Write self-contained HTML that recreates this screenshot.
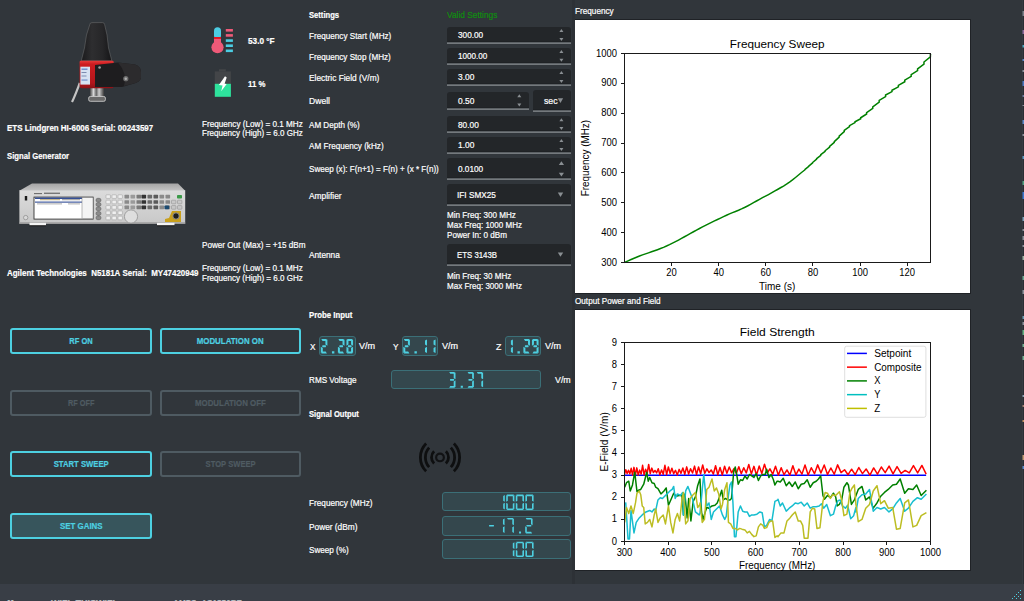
<!DOCTYPE html>
<html><head><meta charset="utf-8"><style>
html,body{margin:0;padding:0;}
body{width:1024px;height:601px;overflow:hidden;position:relative;background:#31363b;font-family:"Liberation Sans",sans-serif;}
.t{position:absolute;white-space:nowrap;line-height:1;-webkit-text-stroke:0.2px currentColor;}
svg{position:absolute;overflow:visible;}
</style></head><body>
<div style="position:absolute;left:572.00px;top:0.00px;width:3.00px;height:584.00px;background:#2d3136"></div>
<div style="position:absolute;left:0.00px;top:584.00px;width:1024.00px;height:17.00px;background:#393e46"></div>
<div class="t" style="left:6.60px;top:123.98px;font-size:9.00px;font-weight:bold;color:#ffffff;transform:scaleX(0.8830);transform-origin:0 0;">ETS Lindgren HI-6006 Serial: 00243597</div>
<div class="t" style="left:6.60px;top:152.48px;font-size:9.00px;font-weight:bold;color:#ffffff;transform:scaleX(0.8563);transform-origin:0 0;">Signal Generator</div>
<div class="t" style="left:6.60px;top:269.38px;font-size:9.00px;font-weight:bold;color:#ffffff;transform:scaleX(0.8828);transform-origin:0 0;">Agilent&nbsp;Technologies&nbsp;&nbsp;N5181A&nbsp;Serial:&nbsp;&nbsp;MY47420949</div>
<div class="t" style="left:247.60px;top:36.98px;font-size:9.00px;font-weight:bold;color:#ffffff;transform:scaleX(0.9136);transform-origin:0 0;">53.0 °F</div>
<div class="t" style="left:247.60px;top:80.18px;font-size:9.00px;font-weight:bold;color:#ffffff;transform:scaleX(0.8692);transform-origin:0 0;">11 %</div>
<div class="t" style="left:201.80px;top:119.68px;font-size:9.00px;font-weight:normal;color:#ffffff;transform:scaleX(0.9057);transform-origin:0 0;">Frequency (Low) = 0.1 MHz</div>
<div class="t" style="left:201.80px;top:129.08px;font-size:9.00px;font-weight:normal;color:#ffffff;transform:scaleX(0.8936);transform-origin:0 0;">Frequency (High) = 6.0 GHz</div>
<div class="t" style="left:201.80px;top:240.98px;font-size:9.00px;font-weight:normal;color:#ffffff;transform:scaleX(0.9027);transform-origin:0 0;">Power Out (Max) = +15 dBm</div>
<div class="t" style="left:201.80px;top:264.48px;font-size:9.00px;font-weight:normal;color:#ffffff;transform:scaleX(0.9057);transform-origin:0 0;">Frequency (Low) = 0.1 MHz</div>
<div class="t" style="left:201.80px;top:273.98px;font-size:9.00px;font-weight:normal;color:#ffffff;transform:scaleX(0.8936);transform-origin:0 0;">Frequency (High) = 6.0 GHz</div>
<div style="position:absolute;left:10.00px;top:328.00px;width:142.00px;height:26.10px;border:2px solid #4dd0e1;border-radius:3px;box-sizing:border-box;"></div>
<div class="t" style="left:67.00px;top:337.43px;font-size:9.00px;font-weight:bold;color:#4dd0e1;transform:scaleX(0.8358);transform-origin:50% 0;">RF ON</div>
<div style="position:absolute;left:160.00px;top:328.00px;width:141.00px;height:26.10px;border:2px solid #4dd0e1;border-radius:3px;box-sizing:border-box;"></div>
<div class="t" style="left:192.34px;top:337.43px;font-size:9.00px;font-weight:bold;color:#4dd0e1;transform:scaleX(0.8778);transform-origin:50% 0;">MODULATION ON</div>
<div style="position:absolute;left:10.00px;top:390.00px;width:142.00px;height:25.80px;border:2px solid #4f5b62;border-radius:3px;box-sizing:border-box;"></div>
<div class="t" style="left:64.75px;top:399.28px;font-size:9.00px;font-weight:bold;color:#4f5b62;transform:scaleX(0.8155);transform-origin:50% 0;">RF OFF</div>
<div style="position:absolute;left:160.00px;top:390.00px;width:141.00px;height:25.80px;border:2px solid #4f5b62;border-radius:3px;box-sizing:border-box;"></div>
<div class="t" style="left:190.09px;top:399.28px;font-size:9.00px;font-weight:bold;color:#4f5b62;transform:scaleX(0.8785);transform-origin:50% 0;">MODULATION OFF</div>
<div style="position:absolute;left:10.00px;top:451.00px;width:142.00px;height:26.00px;border:2px solid #4dd0e1;border-radius:3px;box-sizing:border-box;"></div>
<div class="t" style="left:48.83px;top:460.38px;font-size:9.00px;font-weight:bold;color:#4dd0e1;transform:scaleX(0.8549);transform-origin:50% 0;">START SWEEP</div>
<div style="position:absolute;left:160.00px;top:451.00px;width:141.00px;height:26.00px;border:2px solid #4f5b62;border-radius:3px;box-sizing:border-box;"></div>
<div class="t" style="left:200.91px;top:460.38px;font-size:9.00px;font-weight:bold;color:#4f5b62;transform:scaleX(0.8448);transform-origin:50% 0;">STOP SWEEP</div>
<div style="position:absolute;left:10.00px;top:512.90px;width:142.00px;height:26.00px;border:2px solid #4dd0e1;border-radius:3px;box-sizing:border-box;background:#37555c;"></div>
<div class="t" style="left:56.75px;top:522.28px;font-size:9.00px;font-weight:bold;color:#4dd0e1;transform:scaleX(0.8803);transform-origin:50% 0;">SET GAINS</div>
<div class="t" style="left:309.20px;top:11.28px;font-size:9.00px;font-weight:bold;color:#ffffff;transform:scaleX(0.8478);transform-origin:0 0;">Settings</div>
<div class="t" style="left:446.60px;top:10.88px;font-size:9.00px;font-weight:normal;color:#0f8f0f;transform:scaleX(0.9270);transform-origin:0 0;">Valid Settings</div>
<div class="t" style="left:309.20px;top:32.28px;font-size:9.00px;font-weight:normal;color:#ffffff;transform:scaleX(0.9042);transform-origin:0 0;">Frequency Start (MHz)</div>
<div class="t" style="left:309.20px;top:53.38px;font-size:9.00px;font-weight:normal;color:#ffffff;transform:scaleX(0.9036);transform-origin:0 0;">Frequency Stop (MHz)</div>
<div class="t" style="left:309.20px;top:73.98px;font-size:9.00px;font-weight:normal;color:#ffffff;transform:scaleX(0.9262);transform-origin:0 0;">Electric Field (V/m)</div>
<div class="t" style="left:309.20px;top:97.28px;font-size:9.00px;font-weight:normal;color:#ffffff;transform:scaleX(0.9544);transform-origin:0 0;">Dwell</div>
<div class="t" style="left:309.20px;top:121.08px;font-size:9.00px;font-weight:normal;color:#ffffff;transform:scaleX(0.8971);transform-origin:0 0;">AM Depth (%)</div>
<div class="t" style="left:309.20px;top:142.08px;font-size:9.00px;font-weight:normal;color:#ffffff;transform:scaleX(0.9040);transform-origin:0 0;">AM Frequency (kHz)</div>
<div class="t" style="left:309.20px;top:165.48px;font-size:9.00px;font-weight:normal;color:#ffffff;transform:scaleX(0.8965);transform-origin:0 0;">Sweep (x): F(n+1) = F(n) + (x * F(n))</div>
<div class="t" style="left:309.20px;top:191.58px;font-size:9.00px;font-weight:normal;color:#ffffff;transform:scaleX(0.9312);transform-origin:0 0;">Amplifier</div>
<div class="t" style="left:309.20px;top:251.28px;font-size:9.00px;font-weight:normal;color:#ffffff;transform:scaleX(0.9185);transform-origin:0 0;">Antenna</div>
<div style="position:absolute;left:447.00px;top:27.00px;width:124.00px;height:14.00px;background:#232629;border-radius:3px 3px 0 0"></div>
<div style="position:absolute;left:447.00px;top:41.00px;width:124.00px;height:1.00px;background:#1f2225"></div>
<div style="position:absolute;left:447.00px;top:42.00px;width:124.00px;height:1.00px;background:#5b6064"></div>
<div style="position:absolute;left:447.00px;top:43.00px;width:124.00px;height:1.00px;background:#74797d"></div>
<div class="t" style="left:458.00px;top:31.43px;font-size:9.00px;font-weight:normal;color:#ffffff;transform:scaleX(0.9154);transform-origin:0 0;">300.00</div>
<svg style="left:0;top:0" width="1" height="1"><polygon points="559.4,32.0 563.4,32.0 561.4,29.0" fill="#8a8f93"/><polygon points="559.4,38.1 563.4,38.1 561.4,41.1" fill="#8a8f93"/></svg>
<div style="position:absolute;left:447.00px;top:48.00px;width:124.00px;height:14.00px;background:#232629;border-radius:3px 3px 0 0"></div>
<div style="position:absolute;left:447.00px;top:62.00px;width:124.00px;height:1.00px;background:#1f2225"></div>
<div style="position:absolute;left:447.00px;top:63.00px;width:124.00px;height:1.00px;background:#5b6064"></div>
<div style="position:absolute;left:447.00px;top:64.00px;width:124.00px;height:1.00px;background:#74797d"></div>
<div class="t" style="left:458.00px;top:52.23px;font-size:9.00px;font-weight:normal;color:#ffffff;transform:scaleX(0.9006);transform-origin:0 0;">1000.00</div>
<svg style="left:0;top:0" width="1" height="1"><polygon points="559.4,53.0 563.4,53.0 561.4,50.0" fill="#8a8f93"/><polygon points="559.4,58.7 563.4,58.7 561.4,61.7" fill="#8a8f93"/></svg>
<div style="position:absolute;left:447.00px;top:69.00px;width:124.00px;height:14.00px;background:#232629;border-radius:3px 3px 0 0"></div>
<div style="position:absolute;left:447.00px;top:83.00px;width:124.00px;height:1.00px;background:#1f2225"></div>
<div style="position:absolute;left:447.00px;top:84.00px;width:124.00px;height:1.00px;background:#5b6064"></div>
<div style="position:absolute;left:447.00px;top:85.00px;width:124.00px;height:1.00px;background:#74797d"></div>
<div class="t" style="left:458.00px;top:73.38px;font-size:9.00px;font-weight:normal;color:#ffffff;transform:scaleX(0.9305);transform-origin:0 0;">3.00</div>
<svg style="left:0;top:0" width="1" height="1"><polygon points="559.4,74.0 563.4,74.0 561.4,71.0" fill="#8a8f93"/><polygon points="559.4,80.0 563.4,80.0 561.4,83.0" fill="#8a8f93"/></svg>
<div style="position:absolute;left:447.00px;top:92.00px;width:82.00px;height:15.00px;background:#232629;border-radius:3px 3px 0 0"></div>
<div style="position:absolute;left:447.00px;top:107.00px;width:82.00px;height:1.00px;background:#1f2225"></div>
<div style="position:absolute;left:447.00px;top:108.00px;width:82.00px;height:1.00px;background:#5b6064"></div>
<div style="position:absolute;left:447.00px;top:109.00px;width:82.00px;height:1.00px;background:#74797d"></div>
<div class="t" style="left:458.00px;top:96.78px;font-size:9.00px;font-weight:normal;color:#ffffff;transform:scaleX(0.9305);transform-origin:0 0;">0.50</div>
<svg style="left:0;top:0" width="1" height="1"><polygon points="517.3,97.3 521.3,97.3 519.3,94.3" fill="#8a8f93"/><polygon points="517.3,103.5 521.3,103.5 519.3,106.5" fill="#8a8f93"/></svg>
<div style="position:absolute;left:533.00px;top:90.00px;width:38.00px;height:19.00px;background:#232629;border-radius:3px 3px 0 0"></div>
<div style="position:absolute;left:533.00px;top:109.00px;width:38.00px;height:1.00px;background:#1f2225"></div>
<div style="position:absolute;left:533.00px;top:110.00px;width:38.00px;height:1.00px;background:#5b6064"></div>
<div style="position:absolute;left:533.00px;top:111.00px;width:38.00px;height:1.00px;background:#74797d"></div>
<div class="t" style="left:543.50px;top:96.58px;font-size:9.00px;font-weight:normal;color:#ffffff;transform:scaleX(0.9710);transform-origin:0 0;">sec</div>
<svg style="left:0;top:0" width="1" height="1"><polygon points="557.8,98.3 563.1,98.3 560.45,103" fill="#8a8f93"/></svg>
<div style="position:absolute;left:447.00px;top:116.00px;width:124.00px;height:14.00px;background:#232629;border-radius:3px 3px 0 0"></div>
<div style="position:absolute;left:447.00px;top:130.00px;width:124.00px;height:1.00px;background:#1f2225"></div>
<div style="position:absolute;left:447.00px;top:131.00px;width:124.00px;height:1.00px;background:#5b6064"></div>
<div style="position:absolute;left:447.00px;top:132.00px;width:124.00px;height:1.00px;background:#74797d"></div>
<div class="t" style="left:458.00px;top:120.53px;font-size:9.00px;font-weight:normal;color:#ffffff;transform:scaleX(0.9235);transform-origin:0 0;">80.00</div>
<svg style="left:0;top:0" width="1" height="1"><polygon points="559.4,121.3 563.4,121.3 561.4,118.3" fill="#8a8f93"/><polygon points="559.4,127.0 563.4,127.0 561.4,130.0" fill="#8a8f93"/></svg>
<div style="position:absolute;left:447.00px;top:137.00px;width:124.00px;height:14.00px;background:#232629;border-radius:3px 3px 0 0"></div>
<div style="position:absolute;left:447.00px;top:151.00px;width:124.00px;height:1.00px;background:#1f2225"></div>
<div style="position:absolute;left:447.00px;top:152.00px;width:124.00px;height:1.00px;background:#5b6064"></div>
<div style="position:absolute;left:447.00px;top:153.00px;width:124.00px;height:1.00px;background:#74797d"></div>
<div class="t" style="left:458.00px;top:141.28px;font-size:9.00px;font-weight:normal;color:#ffffff;transform:scaleX(0.9305);transform-origin:0 0;">1.00</div>
<svg style="left:0;top:0" width="1" height="1"><polygon points="559.4,141.9 563.4,141.9 561.4,138.9" fill="#8a8f93"/><polygon points="559.4,147.9 563.4,147.9 561.4,150.9" fill="#8a8f93"/></svg>
<div style="position:absolute;left:447.00px;top:158.00px;width:124.00px;height:19.00px;background:#232629;border-radius:3px 3px 0 0"></div>
<div style="position:absolute;left:447.00px;top:177.00px;width:124.00px;height:1.00px;background:#1f2225"></div>
<div style="position:absolute;left:447.00px;top:178.00px;width:124.00px;height:1.00px;background:#5b6064"></div>
<div style="position:absolute;left:447.00px;top:179.00px;width:124.00px;height:1.00px;background:#74797d"></div>
<div class="t" style="left:458.00px;top:165.08px;font-size:9.00px;font-weight:normal;color:#ffffff;transform:scaleX(0.9154);transform-origin:0 0;">0.0100</div>
<svg style="left:0;top:0" width="1" height="1"><polygon points="558.8,164.9 564.0,164.9 561.4,161.3" fill="#8a8f93"/><polygon points="558.8,172.7 564.0,172.7 561.4,176.6" fill="#8a8f93"/></svg>
<div style="position:absolute;left:447.00px;top:184.00px;width:124.00px;height:19.00px;background:#232629;border-radius:3px 3px 0 0"></div>
<div style="position:absolute;left:447.00px;top:203.00px;width:124.00px;height:1.00px;background:#1f2225"></div>
<div style="position:absolute;left:447.00px;top:204.00px;width:124.00px;height:1.00px;background:#5b6064"></div>
<div style="position:absolute;left:447.00px;top:205.00px;width:124.00px;height:1.00px;background:#74797d"></div>
<div class="t" style="left:457.00px;top:191.03px;font-size:9.00px;font-weight:normal;color:#ffffff;transform:scaleX(0.9150);transform-origin:0 0;">IFI SMX25</div>
<svg style="left:0;top:0" width="1" height="1"><polygon points="557.8,192.6 563.2,192.6 560.5,196.9" fill="#8a8f93"/></svg>
<div class="t" style="left:446.70px;top:210.58px;font-size:9.00px;font-weight:normal;color:#ffffff;transform:scaleX(0.9004);transform-origin:0 0;">Min Freq: 300 MHz</div>
<div class="t" style="left:446.70px;top:220.98px;font-size:9.00px;font-weight:normal;color:#ffffff;transform:scaleX(0.8925);transform-origin:0 0;">Max Freq: 1000 MHz</div>
<div class="t" style="left:446.70px;top:230.58px;font-size:9.00px;font-weight:normal;color:#ffffff;transform:scaleX(0.9018);transform-origin:0 0;">Power In: 0 dBm</div>
<div style="position:absolute;left:447.00px;top:244.00px;width:124.00px;height:19.00px;background:#232629;border-radius:3px 3px 0 0"></div>
<div style="position:absolute;left:447.00px;top:263.00px;width:124.00px;height:1.00px;background:#1f2225"></div>
<div style="position:absolute;left:447.00px;top:264.00px;width:124.00px;height:1.00px;background:#5b6064"></div>
<div style="position:absolute;left:447.00px;top:265.00px;width:124.00px;height:1.00px;background:#74797d"></div>
<div class="t" style="left:457.00px;top:250.88px;font-size:9.00px;font-weight:normal;color:#ffffff;transform:scaleX(0.8690);transform-origin:0 0;">ETS 3143B</div>
<svg style="left:0;top:0" width="1" height="1"><polygon points="557.8,252.4 563.2,252.4 560.5,256.8" fill="#8a8f93"/></svg>
<div class="t" style="left:446.70px;top:272.48px;font-size:9.00px;font-weight:normal;color:#ffffff;transform:scaleX(0.8991);transform-origin:0 0;">Min Freq: 30 MHz</div>
<div class="t" style="left:446.70px;top:282.18px;font-size:9.00px;font-weight:normal;color:#ffffff;transform:scaleX(0.8925);transform-origin:0 0;">Max Freq: 3000 MHz</div>
<div class="t" style="left:309.20px;top:310.78px;font-size:9.00px;font-weight:bold;color:#ffffff;transform:scaleX(0.8660);transform-origin:0 0;">Probe Input</div>
<div class="t" style="left:310.30px;top:342.98px;font-size:9.00px;font-weight:normal;color:#ffffff;transform:scaleX(0.9162);transform-origin:0 0;">X</div>
<div class="t" style="left:359.20px;top:342.48px;font-size:9.00px;font-weight:normal;color:#ffffff;transform:scaleX(1.0062);transform-origin:0 0;">V/m</div>
<div class="t" style="left:392.80px;top:342.98px;font-size:9.00px;font-weight:normal;color:#ffffff;transform:scaleX(0.9162);transform-origin:0 0;">Y</div>
<div class="t" style="left:442.00px;top:342.48px;font-size:9.00px;font-weight:normal;color:#ffffff;transform:scaleX(1.0062);transform-origin:0 0;">V/m</div>
<div class="t" style="left:495.60px;top:342.98px;font-size:9.00px;font-weight:normal;color:#ffffff;transform:scaleX(0.9822);transform-origin:0 0;">Z</div>
<div class="t" style="left:544.50px;top:342.48px;font-size:9.00px;font-weight:normal;color:#ffffff;transform:scaleX(1.0062);transform-origin:0 0;">V/m</div>
<div class="t" style="left:309.20px;top:376.28px;font-size:9.00px;font-weight:normal;color:#ffffff;transform:scaleX(0.9042);transform-origin:0 0;">RMS Voltage</div>
<div class="t" style="left:555.20px;top:375.98px;font-size:9.00px;font-weight:normal;color:#ffffff;transform:scaleX(0.9812);transform-origin:0 0;">V/m</div>
<div class="t" style="left:309.10px;top:409.68px;font-size:9.00px;font-weight:bold;color:#ffffff;transform:scaleX(0.8442);transform-origin:0 0;">Signal Output</div>
<div class="t" style="left:309.00px;top:499.28px;font-size:9.00px;font-weight:normal;color:#ffffff;transform:scaleX(0.9135);transform-origin:0 0;">Frequency (MHz)</div>
<div class="t" style="left:309.00px;top:522.58px;font-size:9.00px;font-weight:normal;color:#ffffff;transform:scaleX(0.9217);transform-origin:0 0;">Power (dBm)</div>
<div class="t" style="left:309.00px;top:546.38px;font-size:9.00px;font-weight:normal;color:#ffffff;transform:scaleX(0.9019);transform-origin:0 0;">Sweep (%)</div>
<div style="position:absolute;left:319.20px;top:336.20px;width:36.40px;height:19.70px;box-sizing:border-box;border:1px solid #3b6f77;border-radius:3px;background:#34474d"></div>
<svg style="left:0;top:0" width="1" height="1"><path d="M321.30,338.90 326.90,338.90 325.70,340.90 322.50,340.90ZM327.40,339.40 327.40,345.75 325.40,344.55 325.40,340.60ZM322.14,346.25 322.50,345.25 325.70,345.25 326.06,346.25 325.70,347.25 322.50,347.25ZM320.80,346.75 322.80,347.95 322.80,351.90 320.80,353.10ZM322.50,351.60 325.70,351.60 326.90,353.60 321.30,353.60ZM331.95,351.30 334.35,351.30 334.35,353.60 331.95,353.60ZM338.40,338.90 344.00,338.90 342.80,340.90 339.60,340.90ZM344.50,339.40 344.50,345.75 342.50,344.55 342.50,340.60ZM339.24,346.25 339.60,345.25 342.80,345.25 343.16,346.25 342.80,347.25 339.60,347.25ZM337.90,346.75 339.90,347.95 339.90,351.90 337.90,353.10ZM339.60,351.60 342.80,351.60 344.00,353.60 338.40,353.60ZM346.95,338.90 352.55,338.90 351.35,340.90 348.15,340.90ZM353.05,339.40 353.05,345.75 351.05,344.55 351.05,340.60ZM353.05,346.75 353.05,353.10 351.05,351.90 351.05,347.95ZM348.15,351.60 351.35,351.60 352.55,353.60 346.95,353.60ZM346.45,346.75 348.45,347.95 348.45,351.90 346.45,353.10ZM346.45,339.40 348.45,340.60 348.45,344.55 346.45,345.75ZM347.79,346.25 348.15,345.25 351.35,345.25 351.71,346.25 351.35,347.25 348.15,347.25Z" fill="#4dd0e1"/></svg>
<div style="position:absolute;left:401.70px;top:336.20px;width:35.90px;height:19.70px;box-sizing:border-box;border:1px solid #3b6f77;border-radius:3px;background:#34474d"></div>
<svg style="left:0;top:0" width="1" height="1"><path d="M403.80,338.90 409.40,338.90 408.20,340.90 405.00,340.90ZM409.90,339.40 409.90,345.75 407.90,344.55 407.90,340.60ZM404.64,346.25 405.00,345.25 408.20,345.25 408.56,346.25 408.20,347.25 405.00,347.25ZM403.30,346.75 405.30,347.95 405.30,351.90 403.30,353.10ZM405.00,351.60 408.20,351.60 409.40,353.60 403.80,353.60ZM414.45,351.30 416.85,351.30 416.85,353.60 414.45,353.60ZM427.00,339.40 427.00,345.75 425.00,344.55 425.00,340.60ZM427.00,346.75 427.00,353.10 425.00,351.90 425.00,347.95ZM435.55,339.40 435.55,345.75 433.55,344.55 433.55,340.60ZM435.55,346.75 435.55,353.10 433.55,351.90 433.55,347.95Z" fill="#4dd0e1"/></svg>
<div style="position:absolute;left:504.70px;top:336.20px;width:35.90px;height:19.70px;box-sizing:border-box;border:1px solid #3b6f77;border-radius:3px;background:#34474d"></div>
<svg style="left:0;top:0" width="1" height="1"><path d="M512.90,339.40 512.90,345.75 510.90,344.55 510.90,340.60ZM512.90,346.75 512.90,353.10 510.90,351.90 510.90,347.95ZM517.45,351.30 519.85,351.30 519.85,353.60 517.45,353.60ZM523.90,338.90 529.50,338.90 528.30,340.90 525.10,340.90ZM530.00,339.40 530.00,345.75 528.00,344.55 528.00,340.60ZM524.74,346.25 525.10,345.25 528.30,345.25 528.66,346.25 528.30,347.25 525.10,347.25ZM523.40,346.75 525.40,347.95 525.40,351.90 523.40,353.10ZM525.10,351.60 528.30,351.60 529.50,353.60 523.90,353.60ZM532.45,338.90 538.05,338.90 536.85,340.90 533.65,340.90ZM538.55,339.40 538.55,345.75 536.55,344.55 536.55,340.60ZM538.55,346.75 538.55,353.10 536.55,351.90 536.55,347.95ZM533.65,351.60 536.85,351.60 538.05,353.60 532.45,353.60ZM531.95,339.40 533.95,340.60 533.95,344.55 531.95,345.75ZM533.29,346.25 533.65,345.25 536.85,345.25 537.21,346.25 536.85,347.25 533.65,347.25Z" fill="#4dd0e1"/></svg>
<div style="position:absolute;left:391.30px;top:370.20px;width:149.30px;height:19.20px;box-sizing:border-box;border:1px solid #3b6f77;border-radius:3px;background:#34474d"></div>
<svg style="left:0;top:0" width="1" height="1"><path d="M449.20,371.90 455.00,371.90 453.92,373.70 450.28,373.70ZM455.50,372.40 455.50,379.35 453.70,378.27 453.70,373.48ZM449.96,379.85 450.28,378.95 453.92,378.95 454.24,379.85 453.92,380.75 450.28,380.75ZM455.50,380.35 455.50,387.30 453.70,386.22 453.70,381.43ZM450.28,386.00 453.92,386.00 455.00,387.80 449.20,387.80ZM460.70,385.70 462.90,385.70 462.90,387.80 460.70,387.80ZM467.60,371.90 473.40,371.90 472.32,373.70 468.68,373.70ZM473.90,372.40 473.90,379.35 472.10,378.27 472.10,373.48ZM468.36,379.85 468.68,378.95 472.32,378.95 472.64,379.85 472.32,380.75 468.68,380.75ZM473.90,380.35 473.90,387.30 472.10,386.22 472.10,381.43ZM468.68,386.00 472.32,386.00 473.40,387.80 467.60,387.80ZM476.80,371.90 482.60,371.90 481.52,373.70 477.88,373.70ZM483.10,372.40 483.10,379.35 481.30,378.27 481.30,373.48ZM483.10,380.35 483.10,387.30 481.30,386.22 481.30,381.43Z" fill="#4dd0e1"/></svg>
<div style="position:absolute;left:442.20px;top:492.10px;width:128.90px;height:19.40px;box-sizing:border-box;border:1px solid #3b6f77;border-radius:3px;background:#34474d"></div>
<svg style="left:0;top:0" width="1" height="1"><path d="M504.80,495.10 504.80,501.80 503.20,500.84 503.20,496.06ZM504.80,502.80 504.80,509.50 503.20,508.54 503.20,503.76ZM506.70,494.60 513.90,494.60 512.94,496.20 507.66,496.20ZM514.40,495.10 514.40,501.80 512.80,500.84 512.80,496.06ZM514.40,502.80 514.40,509.50 512.80,508.54 512.80,503.76ZM507.66,508.40 512.94,508.40 513.90,510.00 506.70,510.00ZM506.20,502.80 507.80,503.76 507.80,508.54 506.20,509.50ZM506.20,495.10 507.80,496.06 507.80,500.84 506.20,501.80ZM516.30,494.60 523.50,494.60 522.54,496.20 517.26,496.20ZM524.00,495.10 524.00,501.80 522.40,500.84 522.40,496.06ZM524.00,502.80 524.00,509.50 522.40,508.54 522.40,503.76ZM517.26,508.40 522.54,508.40 523.50,510.00 516.30,510.00ZM515.80,502.80 517.40,503.76 517.40,508.54 515.80,509.50ZM515.80,495.10 517.40,496.06 517.40,500.84 515.80,501.80ZM525.90,494.60 533.10,494.60 532.14,496.20 526.86,496.20ZM533.60,495.10 533.60,501.80 532.00,500.84 532.00,496.06ZM533.60,502.80 533.60,509.50 532.00,508.54 532.00,503.76ZM526.86,508.40 532.14,508.40 533.10,510.00 525.90,510.00ZM525.40,502.80 527.00,503.76 527.00,508.54 525.40,509.50ZM525.40,495.10 527.00,496.06 527.00,500.84 525.40,501.80Z" fill="#4dd0e1"/></svg>
<div style="position:absolute;left:442.20px;top:516.00px;width:128.90px;height:19.90px;box-sizing:border-box;border:1px solid #3b6f77;border-radius:3px;background:#34474d"></div>
<svg style="left:0;top:0" width="1" height="1"><path d="M488.97,525.70 489.26,524.90 493.74,524.90 494.03,525.70 493.74,526.50 489.26,526.50ZM504.55,518.50 504.55,525.20 502.95,524.24 502.95,519.46ZM504.55,526.20 504.55,532.90 502.95,531.94 502.95,527.16ZM507.00,518.00 513.40,518.00 512.44,519.60 507.96,519.60ZM513.90,518.50 513.90,525.20 512.30,524.24 512.30,519.46ZM513.90,526.20 513.90,532.90 512.30,531.94 512.30,527.16ZM519.05,531.50 521.05,531.50 521.05,533.40 519.05,533.40ZM525.70,518.00 532.10,518.00 531.14,519.60 526.66,519.60ZM532.60,518.50 532.60,525.20 531.00,524.24 531.00,519.46ZM526.37,525.70 526.66,524.90 531.14,524.90 531.43,525.70 531.14,526.50 526.66,526.50ZM525.20,526.20 526.80,527.16 526.80,531.94 525.20,532.90ZM526.66,531.80 531.14,531.80 532.10,533.40 525.70,533.40Z" fill="#4dd0e1"/></svg>
<div style="position:absolute;left:442.20px;top:539.30px;width:128.90px;height:19.80px;box-sizing:border-box;border:1px solid #3b6f77;border-radius:3px;background:#34474d"></div>
<svg style="left:0;top:0" width="1" height="1"><path d="M514.40,542.20 514.40,548.90 512.80,547.94 512.80,543.16ZM514.40,549.90 514.40,556.60 512.80,555.64 512.80,550.86ZM516.30,541.70 523.50,541.70 522.54,543.30 517.26,543.30ZM524.00,542.20 524.00,548.90 522.40,547.94 522.40,543.16ZM524.00,549.90 524.00,556.60 522.40,555.64 522.40,550.86ZM517.26,555.50 522.54,555.50 523.50,557.10 516.30,557.10ZM515.80,549.90 517.40,550.86 517.40,555.64 515.80,556.60ZM515.80,542.20 517.40,543.16 517.40,547.94 515.80,548.90ZM525.90,541.70 533.10,541.70 532.14,543.30 526.86,543.30ZM533.60,542.20 533.60,548.90 532.00,547.94 532.00,543.16ZM533.60,549.90 533.60,556.60 532.00,555.64 532.00,550.86ZM526.86,555.50 532.14,555.50 533.10,557.10 525.90,557.10ZM525.40,549.90 527.00,550.86 527.00,555.64 525.40,556.60ZM525.40,542.20 527.00,543.16 527.00,547.94 525.40,548.90Z" fill="#4dd0e1"/></svg>
<svg style="left:0;top:0" width="1" height="1">
<rect x="214" y="27.3" width="7" height="12" rx="3.5" fill="#4ccde3"/>
<rect x="214" y="37" width="7" height="10" fill="#ef5a78"/>
<rect x="214" y="37" width="7" height="1.9" fill="#e3141e"/>
<circle cx="217.5" cy="47.2" r="6.1" fill="#ef5a78"/>
<rect x="225.8" y="29.0" width="7.1" height="2.6" fill="#ef5a78"/>
<rect x="225.8" y="34.1" width="7.1" height="2.6" fill="#ef5a78"/>
<rect x="225.8" y="39.3" width="7.1" height="2.6" fill="#4ccde3"/>
<rect x="225.8" y="44.4" width="7.1" height="2.6" fill="#4ccde3"/>
<rect x="225.8" y="49.5" width="7.1" height="2.6" fill="#4ccde3"/>
</svg>
<svg style="left:0;top:0" width="1" height="1">
<rect x="219" y="69.2" width="6.8" height="2.4" fill="#434548"/>
<rect x="214.8" y="71.4" width="16.1" height="12.6" fill="#434548"/>
<rect x="214.8" y="83.8" width="16.1" height="13" fill="#2ee39d"/>
<polygon points="225.0,76.3 226.7,77.5 224.6,83.7 226.7,83.9 221.2,91.3 222.6,85.4 218.9,85.0" fill="#ffffff"/>
</svg>
<svg style="left:0;top:0" width="1" height="1"><path d="M434.10,451.29 A8.50,8.50 0 0 0 434.10,463.51M445.90,451.29 A8.50,8.50 0 0 1 445.90,463.51M429.15,447.63 A14.60,14.60 0 0 0 429.15,467.17M450.85,447.63 A14.60,14.60 0 0 1 450.85,467.17M426.14,443.54 A19.60,19.60 0 0 0 426.14,471.26M453.86,443.54 A19.60,19.60 0 0 1 453.86,471.26" fill="none" stroke="#0e0f10" stroke-width="2.8" stroke-linecap="butt"/><circle cx="440.0" cy="457.4" r="3.85" fill="none" stroke="#111214" stroke-width="2.2"/></svg>
<svg style="left:0;top:0" width="1" height="1">
<defs>
<linearGradient id="cone" x1="0" x2="1" y1="0" y2="0"><stop offset="0" stop-color="#1a1a1c"/><stop offset="0.35" stop-color="#2e2e30"/><stop offset="0.7" stop-color="#262628"/><stop offset="1" stop-color="#151517"/></linearGradient>
<linearGradient id="metal" x1="0" x2="1" y1="0" y2="0"><stop offset="0" stop-color="#444"/><stop offset="0.25" stop-color="#d8d8d8"/><stop offset="0.45" stop-color="#666"/><stop offset="0.65" stop-color="#cfcfcf"/><stop offset="1" stop-color="#3a3a3a"/></linearGradient>
<linearGradient id="redg" x1="0" x2="0" y1="0" y2="1"><stop offset="0" stop-color="#e83a3a"/><stop offset="0.12" stop-color="#cc1c20"/><stop offset="0.8" stop-color="#b3161b"/><stop offset="1" stop-color="#8a1216"/></linearGradient>
</defs>
<path d="M79.8,83 C77.5,89 75,96 72,102" stroke="#c4c4c4" stroke-width="2.2" fill="none"/>
<rect x="90" y="87" width="14" height="11" fill="url(#metal)"/>
<rect x="88.7" y="96.5" width="16.7" height="4.8" rx="1.6" fill="#6a6a6a" stroke="#c8c8c8" stroke-width="0.9"/>
<path d="M89.8,24.5 Q90,22.6 92,22.6 L102.5,22.6 Q104.3,22.6 104.6,24.5 L107,35 L108.5,48 L111.8,60.8 L81.3,60.8 L84.5,48 L86.5,35 Z" fill="url(#cone)" stroke="#8a8a8a" stroke-opacity="0.55" stroke-width="0.7"/>
<path d="M79.6,62 Q79.6,60.8 81,60.8 L112.5,60.8 Q113.7,60.8 113.7,62 L113.7,86 Q113.7,88.3 111,88.3 L82,88.3 Q79.6,88.3 79.6,86 Z" fill="url(#redg)"/>
<rect x="80.4" y="66.7" width="9.6" height="17.9" fill="#d6e2f2"/>
<rect x="81.5" y="68.5" width="6" height="1.4" fill="#6a88c8"/>
<rect x="81.5" y="72" width="5" height="1" fill="#7c8cb0"/>
<rect x="81.5" y="75.5" width="5" height="1" fill="#7c8cb0"/>
<rect x="81.5" y="79.5" width="6" height="1.1" fill="#6a88c8"/>
<path d="M95,65 L118,62.5 L135,64.5 Q141,66.5 141,72 L141,78 Q140,81.5 134,83.5 L122,87 L95,87 Z" fill="#1e1d1f"/>
<path d="M118,62.5 L135,64.5 Q141,66.5 141,72 L141,78 Q140,81.5 134,83.5 L124,86 Q128,74 118,62.5 Z" fill="#2c2b2d"/>
<circle cx="125.8" cy="78.7" r="2.6" fill="#6e6e6e"/>
<circle cx="125.8" cy="78.7" r="1.2" fill="#b0b0b0"/>
<circle cx="99.6" cy="67.5" r="1.3" fill="#a0a0a0"/>
</svg>
<svg style="left:0;top:0" width="1" height="1">
<defs>
<linearGradient id="sgtop" x1="0" x2="0" y1="0" y2="1"><stop offset="0" stop-color="#a4a4a4"/><stop offset="1" stop-color="#c4c4c4"/></linearGradient>
<linearGradient id="sgfront" x1="0" x2="0" y1="0" y2="1"><stop offset="0" stop-color="#dcdcdc"/><stop offset="1" stop-color="#c8c8c8"/></linearGradient>
</defs>
<path d="M32,183.4 L178,183.4 L185.2,190.7 L19.4,190.7 Z" fill="url(#sgtop)"/>
<rect x="19.4" y="190.2" width="165.8" height="33.5" fill="url(#sgfront)"/>
<rect x="19.4" y="222.3" width="165.8" height="1.6" fill="#9c9c9c"/>
<rect x="34" y="197.1" width="59.1" height="22" fill="#ffffff" stroke="#333" stroke-width="0.9"/>
<rect x="35" y="197.6" width="47" height="1.3" fill="#1e3c8c"/>
<rect x="35" y="201.6" width="47" height="1" fill="#1e3c8c"/>
<rect x="82" y="197.6" width="11" height="21" fill="#f4f4f4" stroke="#777" stroke-width="0.5"/>
<rect x="40" y="199.3" width="20" height="0.9" fill="#b09a60"/>
<rect x="62" y="199.3" width="18" height="0.9" fill="#8a8a8a"/>
<rect x="37" y="203.5" width="25" height="0.8" fill="#999"/>
<rect x="68" y="203.5" width="12" height="0.8" fill="#999"/>
<rect x="34" y="193.2" width="8" height="0.9" fill="#555"/>
<rect x="44" y="192.6" width="16" height="1.4" fill="#777"/>
<rect x="24.8" y="196" width="2.4" height="4.5" fill="#1a1a1a"/>
<circle cx="25.7" cy="217.6" r="2.2" fill="#d8d8d8" stroke="#8a8a8a" stroke-width="0.7"/>
<rect x="96" y="198.3" width="5" height="3.8" rx="1.8" fill="#8c8c8c" stroke="#555" stroke-width="0.5"/><rect x="96" y="202.6" width="5" height="3.8" rx="1.8" fill="#8c8c8c" stroke="#555" stroke-width="0.5"/><rect x="96" y="206.9" width="5" height="3.8" rx="1.8" fill="#8c8c8c" stroke="#555" stroke-width="0.5"/><rect x="96" y="211.6" width="5" height="3.8" rx="1.8" fill="#8c8c8c" stroke="#555" stroke-width="0.5"/><rect x="96" y="215.9" width="5" height="3.8" rx="1.8" fill="#8c8c8c" stroke="#555" stroke-width="0.5"/>
<rect x="106.0" y="194.8" width="4.4" height="3.6" rx="0.6" fill="#efefef" stroke="#9a9a9a" stroke-width="0.5"/><rect x="106.0" y="200.2" width="4.4" height="3.6" rx="0.6" fill="#efefef" stroke="#9a9a9a" stroke-width="0.5"/><rect x="106.0" y="205.6" width="4.4" height="3.6" rx="0.6" fill="#efefef" stroke="#9a9a9a" stroke-width="0.5"/><rect x="106.0" y="211.0" width="4.4" height="3.6" rx="0.6" fill="#efefef" stroke="#9a9a9a" stroke-width="0.5"/><rect x="106.0" y="216.2" width="4.4" height="3.6" rx="0.6" fill="#efefef" stroke="#9a9a9a" stroke-width="0.5"/><rect x="112.0" y="194.8" width="4.4" height="3.6" rx="0.6" fill="#efefef" stroke="#9a9a9a" stroke-width="0.5"/><rect x="112.0" y="200.2" width="4.4" height="3.6" rx="0.6" fill="#efefef" stroke="#9a9a9a" stroke-width="0.5"/><rect x="112.0" y="205.6" width="4.4" height="3.6" rx="0.6" fill="#efefef" stroke="#9a9a9a" stroke-width="0.5"/><rect x="112.0" y="211.0" width="4.4" height="3.6" rx="0.6" fill="#efefef" stroke="#9a9a9a" stroke-width="0.5"/><rect x="112.0" y="216.2" width="4.4" height="3.6" rx="0.6" fill="#efefef" stroke="#9a9a9a" stroke-width="0.5"/><rect x="118.0" y="194.8" width="4.4" height="3.6" rx="0.6" fill="#efefef" stroke="#9a9a9a" stroke-width="0.5"/><rect x="118.0" y="200.2" width="4.4" height="3.6" rx="0.6" fill="#efefef" stroke="#9a9a9a" stroke-width="0.5"/><rect x="118.0" y="205.6" width="4.4" height="3.6" rx="0.6" fill="#efefef" stroke="#9a9a9a" stroke-width="0.5"/><rect x="118.0" y="211.0" width="4.4" height="3.6" rx="0.6" fill="#efefef" stroke="#9a9a9a" stroke-width="0.5"/><rect x="118.0" y="216.2" width="4.4" height="3.6" rx="0.6" fill="#efefef" stroke="#9a9a9a" stroke-width="0.5"/><rect x="124.5" y="194.8" width="4.6" height="3.6" rx="0.6" fill="#8a8a8a"/><rect x="124.5" y="200.2" width="4.6" height="3.6" rx="0.6" fill="#8a8a8a"/><rect x="124.5" y="205.6" width="4.6" height="3.6" rx="0.6" fill="#8a8a8a"/><rect x="130.5" y="194.8" width="4.6" height="3.6" rx="0.6" fill="#9a9a9a"/><rect x="130.5" y="200.2" width="4.6" height="3.6" rx="0.6" fill="#9a9a9a"/><rect x="130.5" y="205.6" width="4.6" height="3.6" rx="0.6" fill="#9a9a9a"/><rect x="136.5" y="194.8" width="4.6" height="3.6" rx="0.6" fill="#7a7a7a"/><rect x="136.5" y="200.2" width="4.6" height="3.6" rx="0.6" fill="#7a7a7a"/><rect x="136.5" y="205.6" width="4.6" height="3.6" rx="0.6" fill="#7a7a7a"/><rect x="141.5" y="194.8" width="4.6" height="3.6" rx="0.6" fill="#333333"/><rect x="141.5" y="200.2" width="4.6" height="3.6" rx="0.6" fill="#333333"/><rect x="141.5" y="205.6" width="4.6" height="3.6" rx="0.6" fill="#333333"/><rect x="147.5" y="194.8" width="4.6" height="3.6" rx="0.6" fill="#6a6a6a"/><rect x="147.5" y="200.2" width="4.6" height="3.6" rx="0.6" fill="#6a6a6a"/><rect x="147.5" y="205.6" width="4.6" height="3.6" rx="0.6" fill="#6a6a6a"/><rect x="153.5" y="194.8" width="4.6" height="3.6" rx="0.6" fill="#5a5a5a"/><rect x="153.5" y="200.2" width="4.6" height="3.6" rx="0.6" fill="#5a5a5a"/><rect x="153.5" y="205.6" width="4.6" height="3.6" rx="0.6" fill="#5a5a5a"/><rect x="159.5" y="194.8" width="4.6" height="3.6" rx="0.6" fill="#8a8a8a"/><rect x="159.5" y="200.2" width="4.6" height="3.6" rx="0.6" fill="#8a8a8a"/><rect x="159.5" y="205.6" width="4.6" height="3.6" rx="0.6" fill="#8a8a8a"/><rect x="165.5" y="194.8" width="4.6" height="3.6" rx="0.6" fill="#888888"/><rect x="165.5" y="200.2" width="4.6" height="3.6" rx="0.6" fill="#888888"/><rect x="165.5" y="205.6" width="4.6" height="3.6" rx="0.6" fill="#888888"/><rect x="164.5" y="205.6" width="4.6" height="3.6" rx="0.6" fill="#1c4a70"/><rect x="171.5" y="200.2" width="4.4" height="3.6" rx="0.6" fill="#c8c8c8" stroke="#888" stroke-width="0.5"/><rect x="171.5" y="205.6" width="4.4" height="3.6" rx="0.6" fill="#c8c8c8" stroke="#888" stroke-width="0.5"/><rect x="177.5" y="200.2" width="4.4" height="3.6" rx="0.6" fill="#c8c8c8" stroke="#888" stroke-width="0.5"/><rect x="177.5" y="205.6" width="4.4" height="3.6" rx="0.6" fill="#c8c8c8" stroke="#888" stroke-width="0.5"/>
<circle cx="131" cy="216.5" r="6.6" fill="#dedede" stroke="#8a8a8a" stroke-width="0.7"/>
<path d="M165,222 L181,222 L181,211 L172,211 L169,218 L165,219 Z" fill="#c9a01c"/>
<circle cx="176" cy="216" r="3.2" fill="#1e1e1e" stroke="#9a9a9a" stroke-width="0.9"/>
<rect x="177" y="195" width="5" height="3.5" rx="0.8" fill="#3a9a48"/>
<rect x="29.5" y="225" width="16.5" height="1.3" fill="#1a1a1a"/><rect x="29.5" y="222.8" width="16.5" height="2.4" fill="#f4f4f4"/>
<rect x="157" y="225" width="17.5" height="1.3" fill="#1a1a1a"/><rect x="157" y="222.8" width="17.5" height="2.4" fill="#f4f4f4"/>

</svg>
<div class="t" style="left:575.00px;top:7.48px;font-size:9.00px;font-weight:normal;color:#ffffff;transform:scaleX(0.9101);transform-origin:0 0;">Frequency</div>
<div class="t" style="left:575.00px;top:297.48px;font-size:9.00px;font-weight:normal;color:#ffffff;transform:scaleX(0.9053);transform-origin:0 0;">Output Power and Field</div>
<div style="position:absolute;left:575.00px;top:19.00px;width:396.00px;height:275.00px;background:#1f2226"></div>
<div style="position:absolute;left:575.00px;top:20.00px;width:395.00px;height:273.00px;background:#ffffff"></div>
<div style="position:absolute;left:575.00px;top:309.00px;width:396.00px;height:262.00px;background:#1f2226"></div>
<div style="position:absolute;left:575.00px;top:310.00px;width:395.00px;height:260.00px;background:#ffffff"></div>
<svg style="left:0;top:0" width="1" height="1" font-family='"Liberation Sans",sans-serif' fill="#000"><polyline points="624.50,262.50 627.50,261.13 627.50,261.13 630.50,259.77 630.50,259.77 633.50,258.45 633.50,258.45 636.50,257.19 636.50,257.19 639.50,256.01 639.50,256.01 642.50,254.92 642.50,254.92 645.50,253.87 645.50,253.87 648.50,252.84 648.50,252.84 651.50,251.81 651.50,251.81 654.50,250.75 654.50,250.75 657.50,249.67 657.50,249.67 660.50,248.54 660.50,248.54 663.50,247.34 663.50,247.34 666.50,246.05 666.50,246.05 669.50,244.66 669.50,244.66 672.50,243.18 672.50,243.18 675.50,241.64 675.50,241.64 678.50,240.05 678.50,240.05 681.50,238.42 681.50,238.42 684.50,236.76 684.50,236.76 687.50,235.09 687.50,235.09 690.50,233.41 690.50,233.41 693.50,231.74 693.50,231.74 696.50,230.09 696.50,230.09 699.50,228.48 699.50,228.48 702.50,226.89 702.50,226.89 705.50,225.32 705.50,225.32 708.50,223.80 708.50,223.80 711.50,222.33 711.50,222.33 714.50,220.90 714.50,220.90 717.50,219.49 717.50,219.49 720.50,218.07 720.50,218.07 723.50,216.65 723.50,216.65 726.50,215.24 726.50,215.24 729.50,213.90 729.50,213.90 732.50,212.64 732.50,212.64 735.50,211.43 735.50,211.43 738.50,210.21 738.50,210.21 741.50,208.90 741.50,208.90 744.50,207.49 744.50,207.49 747.50,205.98 747.50,205.98 750.50,204.37 750.50,204.37 753.50,202.70 753.50,202.70 756.50,201.00 756.50,201.00 759.50,199.33 759.50,199.33 762.50,197.71 762.50,197.71 765.50,196.13 765.50,196.13 768.50,194.54 768.50,194.54 771.50,192.89 771.50,192.89 774.50,191.19 774.50,191.19 777.50,189.48 777.50,189.48 780.50,187.77 780.50,187.77 783.50,186.03 783.50,186.03 786.50,184.17 786.50,184.17 789.50,182.12 789.50,182.12 792.50,179.87 792.50,179.87 795.50,177.47 795.50,177.47 798.50,175.01 798.50,175.01 801.50,172.49 801.50,172.49 805.06,169.73 805.06,169.41 808.76,166.46 808.76,166.09 812.61,162.92 812.61,162.48 816.62,159.16 816.62,158.66 820.78,155.29 820.78,154.74 825.11,151.35 825.11,150.74 829.62,147.15 829.62,146.46 834.30,142.43 834.30,141.58 839.17,137.12 839.17,136.10 844.24,131.60 844.24,130.49 849.51,126.69 849.51,125.67 854.99,122.67 854.99,121.81 860.69,118.71 860.69,117.75 866.62,113.99 866.62,112.72 872.78,108.37 872.78,106.78 879.18,102.23 879.18,100.45 885.58,96.60 885.58,94.97 891.98,91.66 891.98,90.25 898.38,86.89 898.38,85.45 904.78,81.74 904.78,80.14 911.18,76.28 911.18,74.62 917.58,70.54 917.58,68.79 923.98,64.05 923.98,62.02 930.38,56.78 930.38,54.53 930.50,54.51 930.50,54.00" fill="none" stroke="#008000" stroke-width="1.5" stroke-linejoin="miter"/><rect x="624.50" y="53.50" width="306.00" height="209.00" fill="none" stroke="#1a1a1a" stroke-width="1"/><line x1="621.00" y1="262.50" x2="624.50" y2="262.50" stroke="#1a1a1a" stroke-width="1"/><text x="617.00" y="265.50" font-size="10.00" text-anchor="end" textLength="15.75" lengthAdjust="spacingAndGlyphs">300</text><line x1="621.00" y1="232.50" x2="624.50" y2="232.50" stroke="#1a1a1a" stroke-width="1"/><text x="617.00" y="235.64" font-size="10.00" text-anchor="end" textLength="15.75" lengthAdjust="spacingAndGlyphs">400</text><line x1="621.00" y1="202.50" x2="624.50" y2="202.50" stroke="#1a1a1a" stroke-width="1"/><text x="617.00" y="205.79" font-size="10.00" text-anchor="end" textLength="15.75" lengthAdjust="spacingAndGlyphs">500</text><line x1="621.00" y1="172.50" x2="624.50" y2="172.50" stroke="#1a1a1a" stroke-width="1"/><text x="617.00" y="175.93" font-size="10.00" text-anchor="end" textLength="15.75" lengthAdjust="spacingAndGlyphs">600</text><line x1="621.00" y1="143.50" x2="624.50" y2="143.50" stroke="#1a1a1a" stroke-width="1"/><text x="617.00" y="146.07" font-size="10.00" text-anchor="end" textLength="15.75" lengthAdjust="spacingAndGlyphs">700</text><line x1="621.00" y1="113.50" x2="624.50" y2="113.50" stroke="#1a1a1a" stroke-width="1"/><text x="617.00" y="116.21" font-size="10.00" text-anchor="end" textLength="15.75" lengthAdjust="spacingAndGlyphs">800</text><line x1="621.00" y1="83.50" x2="624.50" y2="83.50" stroke="#1a1a1a" stroke-width="1"/><text x="617.00" y="86.36" font-size="10.00" text-anchor="end" textLength="15.75" lengthAdjust="spacingAndGlyphs">900</text><line x1="621.00" y1="53.50" x2="624.50" y2="53.50" stroke="#1a1a1a" stroke-width="1"/><text x="617.00" y="56.50" font-size="10.00" text-anchor="end" textLength="21.00" lengthAdjust="spacingAndGlyphs">1000</text><line x1="671.50" y1="262.50" x2="671.50" y2="266.00" stroke="#1a1a1a" stroke-width="1"/><text x="671.62" y="276.10" font-size="10.00" text-anchor="middle" textLength="10.50" lengthAdjust="spacingAndGlyphs">20</text><line x1="718.50" y1="262.50" x2="718.50" y2="266.00" stroke="#1a1a1a" stroke-width="1"/><text x="718.74" y="276.10" font-size="10.00" text-anchor="middle" textLength="10.50" lengthAdjust="spacingAndGlyphs">40</text><line x1="765.50" y1="262.50" x2="765.50" y2="266.00" stroke="#1a1a1a" stroke-width="1"/><text x="765.86" y="276.10" font-size="10.00" text-anchor="middle" textLength="10.50" lengthAdjust="spacingAndGlyphs">60</text><line x1="812.50" y1="262.50" x2="812.50" y2="266.00" stroke="#1a1a1a" stroke-width="1"/><text x="812.98" y="276.10" font-size="10.00" text-anchor="middle" textLength="10.50" lengthAdjust="spacingAndGlyphs">80</text><line x1="860.50" y1="262.50" x2="860.50" y2="266.00" stroke="#1a1a1a" stroke-width="1"/><text x="860.10" y="276.10" font-size="10.00" text-anchor="middle" textLength="15.75" lengthAdjust="spacingAndGlyphs">100</text><line x1="907.50" y1="262.50" x2="907.50" y2="266.00" stroke="#1a1a1a" stroke-width="1"/><text x="907.22" y="276.10" font-size="10.00" text-anchor="middle" textLength="15.75" lengthAdjust="spacingAndGlyphs">120</text><text x="777.20" y="47.60" font-size="11.30" text-anchor="middle" textLength="94.70" lengthAdjust="spacingAndGlyphs">Frequency Sweep</text><text x="777.20" y="290.20" font-size="10.00" text-anchor="middle" textLength="36.20" lengthAdjust="spacingAndGlyphs">Time (s)</text><text x="589.30" y="158.10" font-size="10.00" text-anchor="middle" textLength="76.30" lengthAdjust="spacingAndGlyphs" transform="rotate(-90 589.30 158.10)">Frequency (MHz)</text></svg>
<svg style="left:0;top:0" width="1" height="1" font-family='"Liberation Sans",sans-serif' fill="#000"><svg x="0" y="0" style="overflow:visible"><clipPath id="cp2"><rect x="624.50" y="342.50" width="306.00" height="199.00"/></clipPath></svg><g clip-path="url(#cp2)"><line x1="624.50" y1="475.17" x2="926.13" y2="475.17" stroke="#0000ff" stroke-width="1.5"/><polyline points="624.50,474.31 625.81,469.74 627.14,473.44 628.47,470.26 629.82,473.74 631.19,468.32 632.57,475.01 633.96,467.38 635.37,475.07 636.79,467.87 638.22,474.98 639.67,470.14 641.13,474.04 642.61,465.26 644.10,474.84 645.61,469.26 647.13,473.50 648.67,464.46 650.22,473.64 651.79,468.11 653.38,472.58 654.98,470.44 656.59,472.89 658.23,468.82 659.87,474.78 661.54,469.96 663.22,474.35 664.92,465.33 666.64,474.69 668.37,466.89 670.12,473.47 671.89,468.27 673.67,473.71 675.47,470.33 677.30,475.01 679.13,469.38 680.99,473.36 682.87,467.91 684.76,474.33 686.68,466.86 688.61,473.96 690.56,468.76 692.54,473.06 694.53,466.11 696.54,474.52 698.57,466.93 700.62,473.77 702.70,464.94 704.79,473.23 706.90,468.83 709.04,472.57 711.20,469.96 713.37,474.06 715.57,465.72 717.80,474.76 720.04,467.50 722.31,475.06 724.60,466.31 726.91,473.14 729.25,466.94 731.60,472.84 733.99,468.66 736.39,473.32 738.82,466.80 741.28,473.63 743.76,467.72 746.26,472.94 748.79,464.48 751.34,473.91 753.92,466.34 756.53,475.01 759.16,466.09 761.82,473.45 764.50,464.16 767.22,472.99 769.95,468.86 772.72,474.14 775.51,466.31 778.34,475.11 781.19,467.68 784.06,474.72 786.97,469.97 789.91,475.01 792.87,465.65 795.87,474.82 798.89,469.10 801.95,474.13 805.03,464.96 808.15,474.95 811.30,467.76 814.48,473.71 817.69,464.88 820.93,472.99 824.21,465.01 827.52,474.43 830.86,467.99 834.23,474.21 837.64,464.88 841.08,472.63 844.56,469.74 848.07,474.70 851.62,469.21 855.20,474.55 858.82,467.53 862.48,473.60 866.17,469.00 869.90,475.16 873.66,467.97 877.46,474.19 881.31,466.99 885.19,472.64 889.10,466.16 893.06,473.80 897.06,466.65 901.10,473.37 905.17,470.39 909.29,472.78 913.45,465.57 917.65,472.85 921.89,465.45 926.18,474.13" fill="none" stroke="#ff0000" stroke-width="1.5" stroke-linejoin="round"/><polyline points="624.70,487.21 626.49,482.72 628.74,481.22 630.24,490.96 632.49,484.96 634.73,472.23 636.98,491.70 638.48,490.21 640.73,489.46 643.72,484.21 646.72,472.23 648.22,481.22 649.72,477.47 651.96,482.72 654.21,483.46 655.71,487.21 657.96,488.71 660.95,493.95 663.95,490.96 666.19,487.96 668.44,505.19 671.44,498.45 673.69,493.20 675.93,496.20 678.93,495.45 681.93,495.45 683.42,514.93 684.92,493.95 687.17,517.92 688.67,498.45 690.91,520.92 693.16,501.44 695.41,496.95 697.66,485.71 699.90,478.97 700.00,478.97 701.50,511.93 703.00,519.42 705.24,511.93 706.74,507.43 708.99,508.18 711.99,505.94 714.98,505.19 717.23,502.94 719.48,496.95 721.72,490.21 723.22,499.94 725.47,498.45 727.72,499.94 729.96,499.94 731.46,498.45 733.71,471.48 735.21,466.99 736.70,474.48 738.20,484.21 740.45,479.72 742.70,480.47 744.94,475.97 747.19,478.97 749.44,474.48 751.69,475.97 753.93,477.47 756.18,473.73 758.43,480.47 760.67,475.97 762.92,474.48 765.17,474.48 766.67,469.23 768.91,477.47 771.16,474.48 773.41,479.72 774.91,484.96 777.15,481.22 778.00,481.22 780.25,481.97 783.24,478.22 786.24,485.71 789.24,481.97 792.23,486.46 795.23,481.97 798.22,488.71 801.22,484.21 804.22,483.46 807.21,479.72 810.21,487.21 813.21,482.72 816.20,481.22 818.45,478.97 820.70,475.97 822.94,495.45 824.44,499.19 827.44,495.45 830.43,497.70 833.43,493.20 835.68,496.95 837.18,505.94 839.42,504.44 841.67,499.94 843.92,487.21 846.91,482.72 848.41,484.96 851.41,504.44 854.40,499.94 856.00,495.45 858.25,489.46 861.99,486.46 865.74,499.94 869.48,496.95 873.23,508.18 876.97,502.94 880.72,496.20 884.46,492.45 888.21,489.46 892.70,484.96 896.45,484.21 900.19,478.97 904.69,493.20 908.43,488.71 912.93,489.46 916.67,484.96 921.17,495.45 926.41,490.21" fill="none" stroke="#008000" stroke-width="1.5" stroke-linejoin="round"/><polyline points="624.70,504.44 625.75,502.94 627.99,538.90 629.49,538.90 630.99,510.43 633.99,532.90 636.23,522.42 639.23,517.92 642.22,514.93 645.97,511.93 649.72,510.43 651.96,511.93 654.21,508.93 655.71,510.43 657.96,499.94 660.20,497.70 662.45,498.45 664.70,496.20 666.94,493.95 669.94,490.96 672.19,489.46 673.69,486.46 675.18,498.45 677.43,493.95 680.43,495.45 682.67,492.45 683.42,514.93 685.67,490.96 687.92,486.46 690.16,492.45 692.41,498.45 695.41,511.93 699.15,514.93 700.00,513.43 702.25,489.46 703.75,474.48 705.24,489.46 706.74,505.94 708.99,502.94 711.24,519.42 713.48,511.93 716.48,508.93 719.48,505.94 722.47,514.93 724.72,519.42 726.22,516.42 728.46,495.45 729.96,484.96 731.46,481.97 732.96,502.94 734.46,536.65 735.96,536.65 738.20,511.93 740.45,505.94 742.70,511.18 744.94,511.93 747.19,511.93 749.44,516.42 751.69,514.93 753.93,514.93 756.93,514.18 759.93,511.93 762.17,512.68 764.42,526.91 766.67,525.41 769.66,519.42 771.91,520.92 774.91,501.44 777.90,499.94 778.00,499.19 780.25,505.94 782.49,502.94 786.24,511.18 789.24,508.18 792.23,505.94 795.23,502.94 798.22,503.69 801.22,502.19 804.22,505.94 807.21,502.94 810.21,508.18 813.21,506.69 816.20,506.69 819.20,505.94 821.45,503.69 823.69,508.18 826.69,504.44 830.43,515.67 833.43,514.18 835.68,505.94 837.93,500.69 840.17,499.94 842.42,505.94 845.42,508.18 847.66,505.19 850.66,518.67 853.66,515.67 855.90,507.43 856.00,511.93 858.25,498.45 861.99,494.70 865.74,493.95 869.48,489.46 873.23,511.18 876.97,507.43 880.72,508.93 884.46,507.43 888.96,511.93 892.70,508.93 896.45,502.94 900.19,498.45 904.69,511.18 908.43,508.18 912.93,501.44 917.42,497.70 921.17,499.19 926.41,493.95" fill="none" stroke="#17becf" stroke-width="1.5" stroke-linejoin="round"/><polyline points="624.70,522.42 626.49,507.43 628.74,513.43 630.99,505.94 633.24,513.43 635.48,502.94 636.98,493.20 639.23,490.96 640.73,494.70 642.22,505.94 643.72,507.43 645.22,523.91 647.47,522.42 649.72,519.42 651.96,526.91 654.21,514.93 655.71,508.93 657.96,522.42 660.20,517.92 663.20,514.93 665.45,523.91 668.44,505.94 670.69,522.42 672.94,532.90 675.18,519.42 677.43,513.43 679.68,520.92 681.93,499.94 683.42,492.45 685.67,523.91 687.92,520.92 690.16,498.45 692.41,495.45 695.41,492.45 697.66,507.43 699.90,504.44 700.00,502.94 702.25,522.42 704.49,519.42 706.74,489.46 708.99,487.21 711.99,478.97 714.23,490.96 716.48,487.96 718.73,493.95 720.97,508.93 722.47,504.44 724.72,489.46 726.97,482.72 728.46,522.42 730.71,523.91 732.96,528.41 735.21,528.41 737.45,529.91 739.70,528.41 741.95,529.16 744.94,529.91 747.19,532.90 749.44,531.40 751.69,534.40 753.93,536.65 756.18,535.90 758.43,526.91 760.67,523.91 762.92,525.41 764.42,528.41 766.67,527.66 768.91,522.42 771.16,520.92 772.66,520.92 774.91,537.40 777.15,535.90 778.00,536.65 781.00,532.90 783.99,532.90 786.99,520.92 789.99,517.92 792.23,514.93 795.23,511.93 798.22,520.92 800.47,520.92 802.72,525.41 804.22,538.15 807.96,538.15 810.21,511.93 812.46,508.18 814.70,508.93 816.95,528.41 819.95,527.66 822.94,501.44 825.19,492.45 827.44,493.20 830.43,498.45 832.68,494.70 835.68,495.45 839.42,491.70 841.67,499.94 843.92,515.67 846.91,514.18 849.91,492.45 852.16,487.96 854.40,484.96 855.90,504.44 856.00,504.44 858.25,521.67 861.99,519.42 865.74,508.18 869.48,504.44 873.23,490.96 876.97,485.71 880.72,503.69 884.46,500.69 888.21,508.18 892.70,507.43 896.45,529.16 900.19,528.41 904.69,502.94 908.43,499.94 912.93,526.91 916.67,525.41 921.17,515.67 926.41,512.68" fill="none" stroke="#bcbd22" stroke-width="1.5" stroke-linejoin="round"/></g><rect x="624.50" y="342.50" width="306.00" height="199.00" fill="none" stroke="#1a1a1a" stroke-width="1"/><line x1="621.00" y1="541.50" x2="624.50" y2="541.50" stroke="#1a1a1a" stroke-width="1"/><text x="617.00" y="544.50" font-size="10.00" text-anchor="end" textLength="5.25" lengthAdjust="spacingAndGlyphs">0</text><line x1="621.00" y1="519.50" x2="624.50" y2="519.50" stroke="#1a1a1a" stroke-width="1"/><text x="617.00" y="522.39" font-size="10.00" text-anchor="end" textLength="5.25" lengthAdjust="spacingAndGlyphs">1</text><line x1="621.00" y1="497.50" x2="624.50" y2="497.50" stroke="#1a1a1a" stroke-width="1"/><text x="617.00" y="500.28" font-size="10.00" text-anchor="end" textLength="5.25" lengthAdjust="spacingAndGlyphs">2</text><line x1="621.00" y1="475.50" x2="624.50" y2="475.50" stroke="#1a1a1a" stroke-width="1"/><text x="617.00" y="478.17" font-size="10.00" text-anchor="end" textLength="5.25" lengthAdjust="spacingAndGlyphs">3</text><line x1="621.00" y1="453.50" x2="624.50" y2="453.50" stroke="#1a1a1a" stroke-width="1"/><text x="617.00" y="456.06" font-size="10.00" text-anchor="end" textLength="5.25" lengthAdjust="spacingAndGlyphs">4</text><line x1="621.00" y1="430.50" x2="624.50" y2="430.50" stroke="#1a1a1a" stroke-width="1"/><text x="617.00" y="433.94" font-size="10.00" text-anchor="end" textLength="5.25" lengthAdjust="spacingAndGlyphs">5</text><line x1="621.00" y1="408.50" x2="624.50" y2="408.50" stroke="#1a1a1a" stroke-width="1"/><text x="617.00" y="411.83" font-size="10.00" text-anchor="end" textLength="5.25" lengthAdjust="spacingAndGlyphs">6</text><line x1="621.00" y1="386.50" x2="624.50" y2="386.50" stroke="#1a1a1a" stroke-width="1"/><text x="617.00" y="389.72" font-size="10.00" text-anchor="end" textLength="5.25" lengthAdjust="spacingAndGlyphs">7</text><line x1="621.00" y1="364.50" x2="624.50" y2="364.50" stroke="#1a1a1a" stroke-width="1"/><text x="617.00" y="367.61" font-size="10.00" text-anchor="end" textLength="5.25" lengthAdjust="spacingAndGlyphs">8</text><line x1="621.00" y1="342.50" x2="624.50" y2="342.50" stroke="#1a1a1a" stroke-width="1"/><text x="617.00" y="345.50" font-size="10.00" text-anchor="end" textLength="5.25" lengthAdjust="spacingAndGlyphs">9</text><line x1="624.50" y1="541.50" x2="624.50" y2="545.00" stroke="#1a1a1a" stroke-width="1"/><text x="624.50" y="555.80" font-size="10.00" text-anchor="middle" textLength="15.75" lengthAdjust="spacingAndGlyphs">300</text><line x1="668.50" y1="541.50" x2="668.50" y2="545.00" stroke="#1a1a1a" stroke-width="1"/><text x="668.21" y="555.80" font-size="10.00" text-anchor="middle" textLength="15.75" lengthAdjust="spacingAndGlyphs">400</text><line x1="711.50" y1="541.50" x2="711.50" y2="545.00" stroke="#1a1a1a" stroke-width="1"/><text x="711.93" y="555.80" font-size="10.00" text-anchor="middle" textLength="15.75" lengthAdjust="spacingAndGlyphs">500</text><line x1="755.50" y1="541.50" x2="755.50" y2="545.00" stroke="#1a1a1a" stroke-width="1"/><text x="755.64" y="555.80" font-size="10.00" text-anchor="middle" textLength="15.75" lengthAdjust="spacingAndGlyphs">600</text><line x1="799.50" y1="541.50" x2="799.50" y2="545.00" stroke="#1a1a1a" stroke-width="1"/><text x="799.36" y="555.80" font-size="10.00" text-anchor="middle" textLength="15.75" lengthAdjust="spacingAndGlyphs">700</text><line x1="843.50" y1="541.50" x2="843.50" y2="545.00" stroke="#1a1a1a" stroke-width="1"/><text x="843.07" y="555.80" font-size="10.00" text-anchor="middle" textLength="15.75" lengthAdjust="spacingAndGlyphs">800</text><line x1="886.50" y1="541.50" x2="886.50" y2="545.00" stroke="#1a1a1a" stroke-width="1"/><text x="886.79" y="555.80" font-size="10.00" text-anchor="middle" textLength="15.75" lengthAdjust="spacingAndGlyphs">900</text><line x1="930.50" y1="541.50" x2="930.50" y2="545.00" stroke="#1a1a1a" stroke-width="1"/><text x="930.50" y="555.80" font-size="10.00" text-anchor="middle" textLength="21.00" lengthAdjust="spacingAndGlyphs">1000</text><text x="777.20" y="335.80" font-size="11.30" text-anchor="middle" textLength="75.00" lengthAdjust="spacingAndGlyphs">Field Strength</text><text x="777.20" y="569.00" font-size="10.00" text-anchor="middle" textLength="76.40" lengthAdjust="spacingAndGlyphs">Frequency (MHz)</text><text x="607.70" y="441.80" font-size="10.00" text-anchor="middle" textLength="59.30" lengthAdjust="spacingAndGlyphs" transform="rotate(-90 607.70 441.80)">E-Field (V/m)</text><rect x="844.7" y="346.2" width="81.2" height="71.1" rx="2" fill="#fff" fill-opacity="0.8" stroke="#d6d6d6" stroke-width="0.8"/><line x1="847" y1="353.40" x2="866.9" y2="353.40" stroke="#0000ff" stroke-width="1.5"/><text x="874.20" y="356.75" font-size="10.00" text-anchor="start" textLength="37.10" lengthAdjust="spacingAndGlyphs">Setpoint</text><line x1="847" y1="367.15" x2="866.9" y2="367.15" stroke="#ff0000" stroke-width="1.5"/><text x="874.20" y="370.50" font-size="10.00" text-anchor="start" textLength="47.30" lengthAdjust="spacingAndGlyphs">Composite</text><line x1="847" y1="380.90" x2="866.9" y2="380.90" stroke="#008000" stroke-width="1.5"/><text x="874.20" y="384.25" font-size="10.00" text-anchor="start" textLength="6.20" lengthAdjust="spacingAndGlyphs">X</text><line x1="847" y1="394.65" x2="866.9" y2="394.65" stroke="#00bfbf" stroke-width="1.5"/><text x="874.20" y="398.00" font-size="10.00" text-anchor="start" textLength="6.20" lengthAdjust="spacingAndGlyphs">Y</text><line x1="847" y1="408.40" x2="866.9" y2="408.40" stroke="#bfbf00" stroke-width="1.5"/><text x="874.20" y="411.75" font-size="10.00" text-anchor="start" textLength="6.00" lengthAdjust="spacingAndGlyphs">Z</text></svg>
<div style="position:absolute;left:1022.00px;top:0.00px;width:1.00px;height:584.00px;background:#363b42"></div>
<div style="position:absolute;left:1023.00px;top:0.00px;width:1.00px;height:584.00px;background:#2a2e33"></div>
<svg style="left:0;top:0" width="1" height="1"><rect x="1020" y="590" width="1" height="1" fill="#4dd0e1"/><rect x="1018" y="592" width="1" height="1" fill="#4dd0e1"/><rect x="1020" y="594" width="1" height="1" fill="#4dd0e1"/><rect x="1016" y="594" width="1" height="1" fill="#4dd0e1"/><rect x="1014" y="596" width="1" height="1" fill="#4dd0e1"/><rect x="1018" y="596" width="1" height="1" fill="#4dd0e1"/><rect x="1012" y="598" width="1" height="1" fill="#4dd0e1"/><rect x="1016" y="598" width="1" height="1" fill="#4dd0e1"/><rect x="1020" y="598" width="1" height="1" fill="#4dd0e1"/></svg>
<div class="t" style="left:7.00px;top:599.48px;font-size:9.00px;font-weight:bold;color:#c0c4c8;transform:scaleX(1.3998);transform-origin:0 0;">II</div>
<div class="t" style="left:51.00px;top:599.48px;font-size:9.00px;font-weight:bold;color:#b8bcc0;transform:scaleX(1.0002);transform-origin:0 0;">WIFI: THISWIFI</div>
<div class="t" style="left:173.00px;top:599.48px;font-size:9.00px;font-weight:bold;color:#b8bcc0;transform:scaleX(0.9056);transform-origin:0 0;">AMPS: AS1850RE</div>
<svg style="left:0;top:0" width="1" height="1"><rect x="1022.5" y="11.0" width="1.5" height="5.0" fill="#7a8088"/><rect x="1022.5" y="30.0" width="1.5" height="4.0" fill="#8a6a9a"/><rect x="1022.5" y="45.0" width="1.5" height="2.5" fill="#4aa8c0"/><rect x="1022.5" y="59.0" width="1.5" height="2.0" fill="#5a88c8"/><rect x="1022.5" y="70.0" width="1.5" height="2.0" fill="#8a9098"/><rect x="1022.5" y="81.0" width="1.5" height="5.0" fill="#4a78c0"/><rect x="1022.5" y="95.0" width="1.5" height="2.0" fill="#6a7a9a"/><rect x="1022.5" y="105.0" width="1.5" height="1.0" fill="#8a9098"/><rect x="1022.5" y="120.0" width="1.5" height="4.0" fill="#5a88c8"/><rect x="1022.5" y="134.0" width="1.5" height="2.0" fill="#8a9098"/><rect x="1022.5" y="156.0" width="1.5" height="3.0" fill="#5a98c0"/><rect x="1022.5" y="181.0" width="1.5" height="4.0" fill="#50a080"/><rect x="1022.5" y="192.0" width="1.5" height="7.0" fill="#3a78d0"/><rect x="1022.5" y="217.0" width="1.5" height="4.0" fill="#7aa0b8"/><rect x="1022.5" y="229.0" width="1.5" height="2.0" fill="#8a9098"/><rect x="1022.5" y="236.0" width="1.5" height="4.0" fill="#8a9098"/><rect x="1022.5" y="245.0" width="1.5" height="2.0" fill="#8a9098"/><rect x="1022.5" y="256.0" width="1.5" height="4.0" fill="#9ab0a0"/><rect x="1022.5" y="276.0" width="1.5" height="4.0" fill="#6aa890"/><rect x="1022.5" y="290.0" width="1.5" height="4.0" fill="#8a9098"/><rect x="1022.5" y="316.0" width="1.5" height="3.0" fill="#6a9ab0"/><rect x="1022.5" y="322.0" width="1.5" height="3.0" fill="#8a9098"/><rect x="1022.5" y="330.0" width="1.5" height="5.0" fill="#60b080"/><rect x="1022.5" y="344.0" width="1.5" height="3.0" fill="#70b090"/><rect x="1022.5" y="356.0" width="1.5" height="4.0" fill="#70b090"/><rect x="1022.5" y="395.0" width="1.5" height="2.0" fill="#8aa0b0"/><rect x="1022.5" y="405.0" width="1.5" height="2.0" fill="#a08070"/><rect x="1022.5" y="420.0" width="1.5" height="2.0" fill="#c09060"/><rect x="1022.5" y="455.0" width="1.5" height="5.0" fill="#c09a70"/><rect x="1022.5" y="466.0" width="1.5" height="3.0" fill="#5a88c8"/></svg>
</body></html>
